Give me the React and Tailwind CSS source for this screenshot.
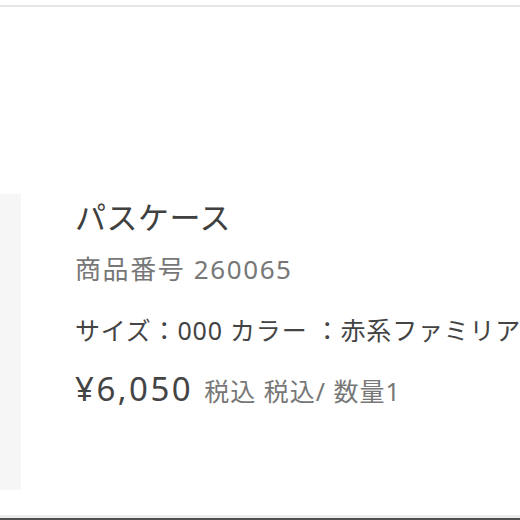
import React from 'react';

const font = { fontFamily: '"Noto Sans", "Noto Sans CJK JP", sans-serif' };

const App = () => {
  return (
    <div className="w-[520px] h-[520px] overflow-hidden bg-white flex flex-col" style={font}>
      <div className="h-[5px]" />
      <div className="h-[2px] bg-[#e6e6e6]" />

      <div className="flex-1 flex flex-col">
        <div className="h-[187px]" />
        <div className="flex">
          <div className="w-[21px] h-[296px] bg-[#f6f6f6] shrink-0" />
          <div className="ml-[54px] pt-[3px] min-w-0 flex-1 overflow-hidden">
            <h2 className="text-[31px] leading-[40px] text-[#404040] tracking-[0.5px]">パスケース</h2>
            <p className="mt-[14px] text-[26px] leading-[36px] text-[#777] tracking-[1.6px]">商品番号 260065</p>
            <p className="mt-[25px] text-[25px] leading-[36px] text-[#444] tracking-[0.8px] whitespace-nowrap">
              サイズ：000 カラー ：赤系ファミリアー
            </p>
            <p className="mt-[21px] leading-[40px] whitespace-nowrap">
              <span className="text-[33px] text-[#444] tracking-[2.5px]">¥6,050</span>
              <span className="ml-[11px] text-[25px] text-[#777] tracking-[1px]">税込 税込/ 数量1</span>
            </p>
          </div>
        </div>
      </div>

      <div className="h-[3px] bg-[#ececec]" />
      <div className="h-[2px] bg-[#505050]" />
    </div>
  );
};

export default App;
